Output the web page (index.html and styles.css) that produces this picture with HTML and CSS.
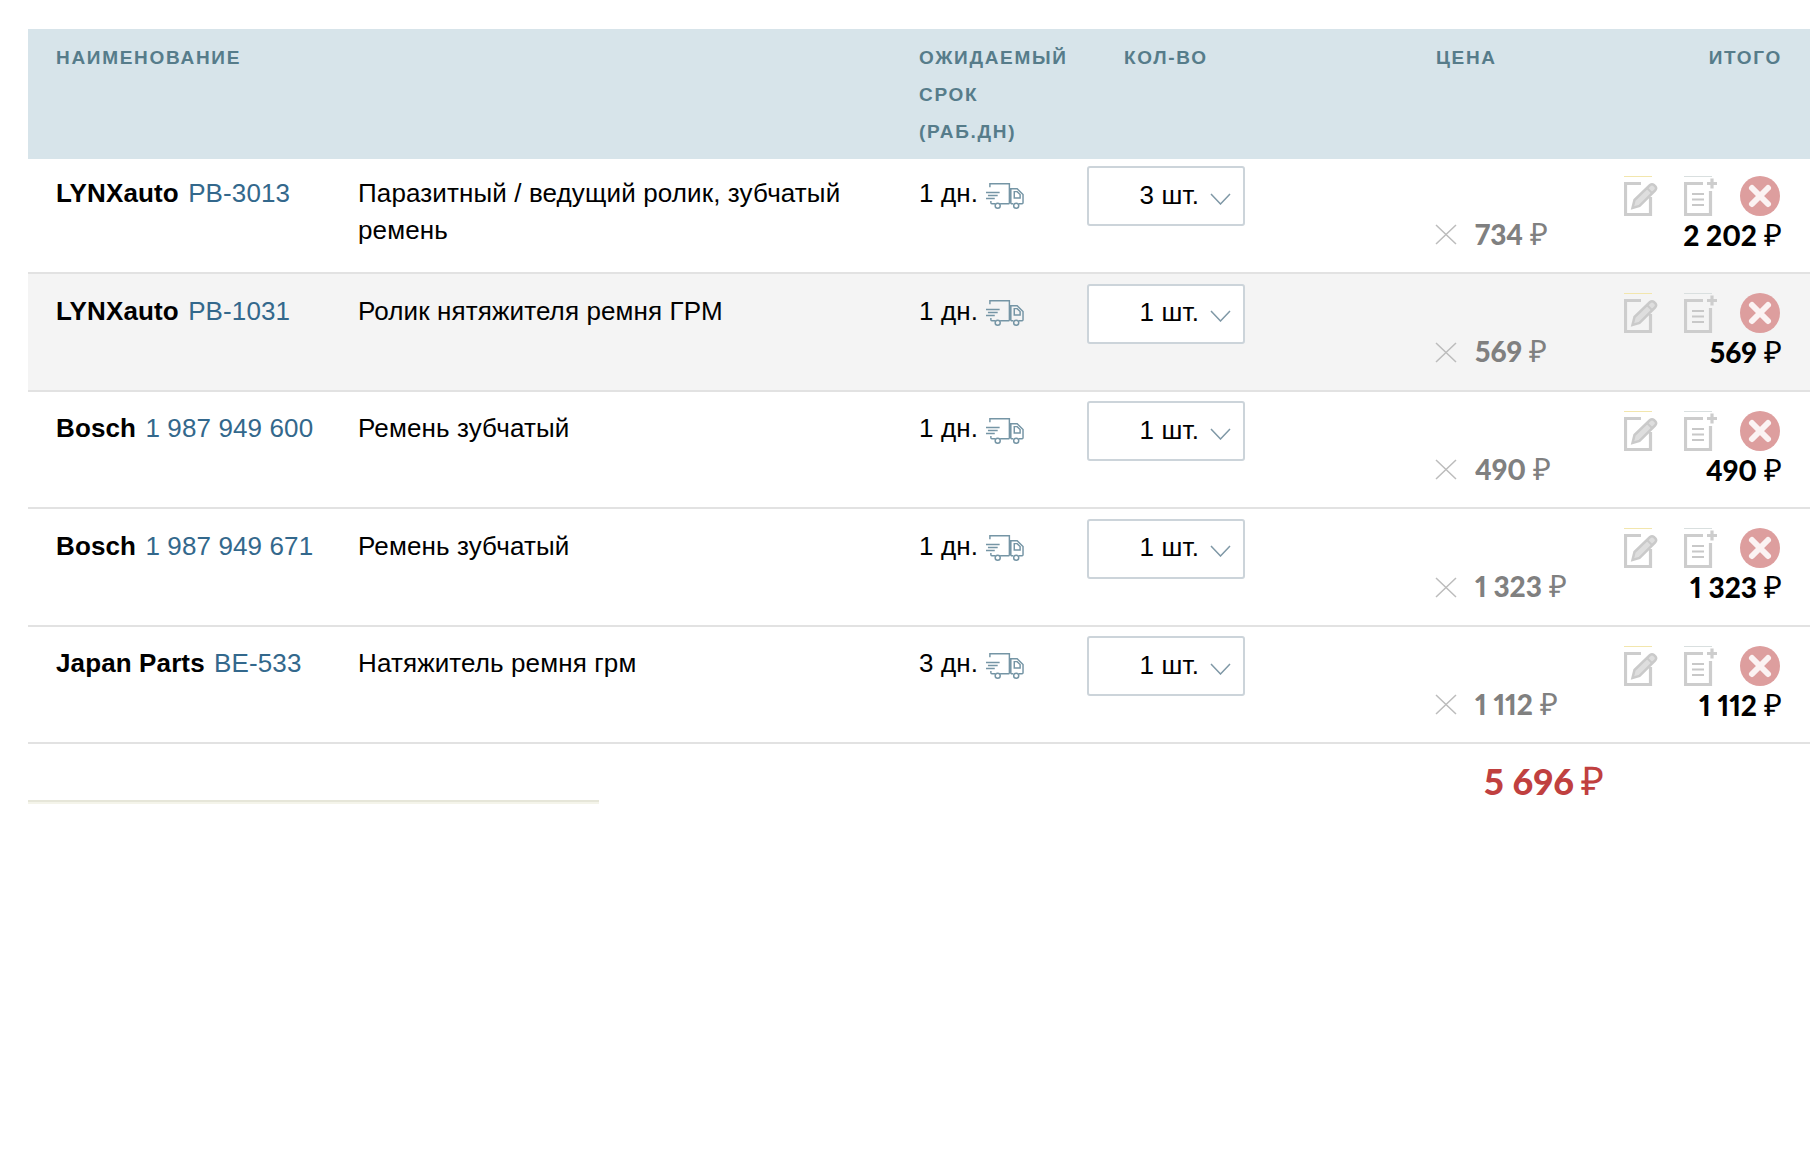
FILE: index.html
```html
<!DOCTYPE html>
<html lang="ru">
<head>
<meta charset="utf-8">
<title>Корзина</title>
<link rel="stylesheet" href="styles.css">
</head>
<body>
<svg class="defs" aria-hidden="true">
  <defs>
    <symbol id="truck" viewBox="0 0 39 29"><g fill="none" stroke="#7595a5" stroke-width="1.5"><path d="M4 5V1.5H24V22M14.5 22H24M25.5 22H28M25.500 22V6.500H32L38 12.500V21Q38 22 37 22H33.700"/><path d="M29 9.500H32L35 12.500V16H29Z"/><path d="M0 10.500H14M2 13.500H12M0 16.500H9M5 19V21Q5 22 6 22H9.500"/><circle cx="12" cy="24" r="2.600"/><circle cx="31" cy="24" r="2.600"/></g></symbol>
    <symbol id="edit" viewBox="0 0 34 40"><rect width="28" height="1" fill="#f2e6ad"/><path d="M17 7.500H1.500V38.500H26.500V21" fill="none" stroke="#cdcdcd" stroke-width="3.200"/><path d="M8.500 32 10.500 24 26 9Q28 7.500 30 9L31.500 10.500Q33 12.500 31 14.500L15.500 30Z" fill="#dedede" stroke="#cacaca" stroke-width="2.500"/><path d="M23 12 28.500 17.500" stroke="#cacaca" stroke-width="2"/></symbol>
    <symbol id="note" viewBox="0 0 34 40"><rect width="28" height="1" fill="#d9dfdf"/><path d="M19 7.500H1.500V38.500H26.500V15" fill="none" stroke="#cdcdcd" stroke-width="3.200"/><path d="M8 18H20M8 23.500H20M8 29H20" stroke="#c8c8c8" stroke-width="2.200"/><path d="M23 7.500H33M28 2.500V12.500" stroke="#cdcdcd" stroke-width="3.200"/></symbol>
    <symbol id="del" viewBox="0 0 40 40"><circle cx="20" cy="20" r="20" fill="#dd9e9e"/><path d="M12 12 28 28M28 12 12 28" stroke="#fbf3f3" stroke-width="6" stroke-linecap="round"/></symbol>
    <symbol id="times" viewBox="0 0 22 21"><path d="M1 1 21 20M21 1 1 20" fill="none" stroke="#bcbcbc" stroke-width="1.500"/></symbol>
    <symbol id="chev" viewBox="0 0 21 12"><path d="M1 1 10.500 11 20 1" fill="none" stroke="#7f98a6" stroke-width="1.500"/></symbol>
  </defs>
</svg>
<main class="cart">
  <div class="grid head">
    <div>НАИМЕНОВАНИЕ</div>
    <div></div>
    <div class="head-term">ОЖИДАЕМЫЙ СРОК (РАБ.ДН)</div>
    <div class="head-qty">КОЛ-ВО</div>
    <div>ЦЕНА</div>
    <div class="head-total">ИТОГО</div>
  </div>

  <div class="grid row row-first">
    <div class="cell-text"><b>LYNXauto</b> <a class="code">PB-3013</a></div>
    <div class="cell-text desc">Паразитный / ведущий ролик, зубчатый ремень</div>
    <div class="cell-text term">1 дн.<svg class="truck"><use href="#truck"/></svg></div>
    <div class="qty"><span>3 шт.</span><svg class="chev"><use href="#chev"/></svg></div>
    <div class="price"><svg class="times"><use href="#times"/></svg><span>734</span><i>₽</i></div>
    <div class="actions-cell">
      <div class="actions"><svg class="ico"><use href="#edit"/></svg><svg class="ico"><use href="#note"/></svg><svg class="ico-del"><use href="#del"/></svg></div>
      <div class="total">2 202<i>₽</i></div>
    </div>
  </div>

  <div class="grid row row-alt">
    <div class="cell-text"><b>LYNXauto</b> <a class="code">PB-1031</a></div>
    <div class="cell-text desc">Ролик нятяжителя ремня ГРМ</div>
    <div class="cell-text term">1 дн.<svg class="truck"><use href="#truck"/></svg></div>
    <div class="qty"><span>1 шт.</span><svg class="chev"><use href="#chev"/></svg></div>
    <div class="price"><svg class="times"><use href="#times"/></svg><span>569</span><i>₽</i></div>
    <div class="actions-cell">
      <div class="actions"><svg class="ico"><use href="#edit"/></svg><svg class="ico"><use href="#note"/></svg><svg class="ico-del"><use href="#del"/></svg></div>
      <div class="total">569<i>₽</i></div>
    </div>
  </div>

  <div class="grid row">
    <div class="cell-text"><b>Bosch</b> <a class="code">1 987 949 600</a></div>
    <div class="cell-text desc">Ремень зубчатый</div>
    <div class="cell-text term">1 дн.<svg class="truck"><use href="#truck"/></svg></div>
    <div class="qty"><span>1 шт.</span><svg class="chev"><use href="#chev"/></svg></div>
    <div class="price"><svg class="times"><use href="#times"/></svg><span>490</span><i>₽</i></div>
    <div class="actions-cell">
      <div class="actions"><svg class="ico"><use href="#edit"/></svg><svg class="ico"><use href="#note"/></svg><svg class="ico-del"><use href="#del"/></svg></div>
      <div class="total">490<i>₽</i></div>
    </div>
  </div>

  <div class="grid row">
    <div class="cell-text"><b>Bosch</b> <a class="code">1 987 949 671</a></div>
    <div class="cell-text desc">Ремень зубчатый</div>
    <div class="cell-text term">1 дн.<svg class="truck"><use href="#truck"/></svg></div>
    <div class="qty"><span>1 шт.</span><svg class="chev"><use href="#chev"/></svg></div>
    <div class="price"><svg class="times"><use href="#times"/></svg><span>1 323</span><i>₽</i></div>
    <div class="actions-cell">
      <div class="actions"><svg class="ico"><use href="#edit"/></svg><svg class="ico"><use href="#note"/></svg><svg class="ico-del"><use href="#del"/></svg></div>
      <div class="total">1 323<i>₽</i></div>
    </div>
  </div>

  <div class="grid row">
    <div class="cell-text"><b>Japan Parts</b> <a class="code">BE-533</a></div>
    <div class="cell-text desc">Натяжитель ремня грм</div>
    <div class="cell-text term">3 дн.<svg class="truck"><use href="#truck"/></svg></div>
    <div class="qty"><span>1 шт.</span><svg class="chev"><use href="#chev"/></svg></div>
    <div class="price"><svg class="times"><use href="#times"/></svg><span>1 112</span><i>₽</i></div>
    <div class="actions-cell">
      <div class="actions"><svg class="ico"><use href="#edit"/></svg><svg class="ico"><use href="#note"/></svg><svg class="ico-del"><use href="#del"/></svg></div>
      <div class="total">1 112<i>₽</i></div>
    </div>
  </div>

  <div class="summary">
    <div class="bar"></div>
    <div class="grand">5 696<i>₽</i></div>
  </div>
</main>
</body>
</html>
```

FILE: styles.css
```css
* { box-sizing: border-box; }
html, body { margin: 0; background: #fff; }
body {
  min-height: 1164px;
  font-family: "Liberation Sans", Arial, sans-serif;
  color: #000;
  font-size: 26px;
  letter-spacing: 0.12px;
  line-height: 37px;
}
.defs { display: none; }
.cart { margin: 29px 9px 0 28px; }
.grid {
  display: grid;
  grid-template-columns: 302px 561px 168px 349px 188px 158px 28px;
  padding-left: 28px;
  align-items: start;
}
.head {
  height: 130px;
  padding-top: 9.5px;
  background: #d7e4ea;
  color: #567c8a;
  font-size: 19px;
  font-weight: 700;
  letter-spacing: 1.7px;
}
.head-term { width: 160px; }
.head-qty { padding-left: 37px; }
.head-total { text-align: right; }
.row {
  height: 117.5px;
  padding-top: 9.5px;
  border-bottom: 2px solid #e2e2e2;
}
.row-first { height: 115px; padding-top: 7px; }
.row-alt { background: #f4f4f4; }
.cell-text { margin-top: 9px; }
.desc { padding-right: 60px; }
.code { color: #33688c; margin-left: 2px; }
.term { display: flex; align-items: center; gap: 8px; }
.truck { width: 38px; height: 29px; margin-top: 5px; }
.qty {
  display: flex;
  align-items: center;
  justify-content: flex-end;
  gap: 11px;
  width: 158px;
  height: 60px;
  padding: 0 12px 2px 0;
  border: 2px solid #ccd4da;
  border-radius: 3px;
  background: #fff;
}
.chev { width: 21px; height: 12px; margin-top: 7px; }
.price, .total, .grand {
  font-family: Lato, "Liberation Sans", sans-serif;
  font-weight: 900;
  font-variant-numeric: proportional-nums;
  letter-spacing: 0;
}
.price {
  display: flex;
  align-items: center;
  margin: 48.5px 0 0 -1px;
  font-size: 28px;
  line-height: 38px;
  color: #808080;
}
.times { width: 22px; height: 21px; margin: 2px 18px 0 0; }
i { font-style: normal; font-weight: 400; font-size: 1.1em; margin-left: 7px; }
.actions-cell { margin-top: 9.5px; text-align: right; }
.actions { display: flex; height: 40px; }
.ico { width: 34px; height: 40px; margin-right: 26px; }
.ico-del { width: 40px; height: 40px; margin-left: -4px; flex: none; }
.total { font-size: 28px; line-height: 38px; }
.summary { display: flex; justify-content: space-between; height: 60px; }
.bar {
  width: 571px;
  height: 4px;
  margin-top: 56px;
  background: linear-gradient(#e6e6d9 50%, #f4f4ea 50%);
}
.grand {
  margin: 16px 206px 0 0;
  font-size: 36px;
  line-height: 40px;
  color: #c0403f;
}
```
